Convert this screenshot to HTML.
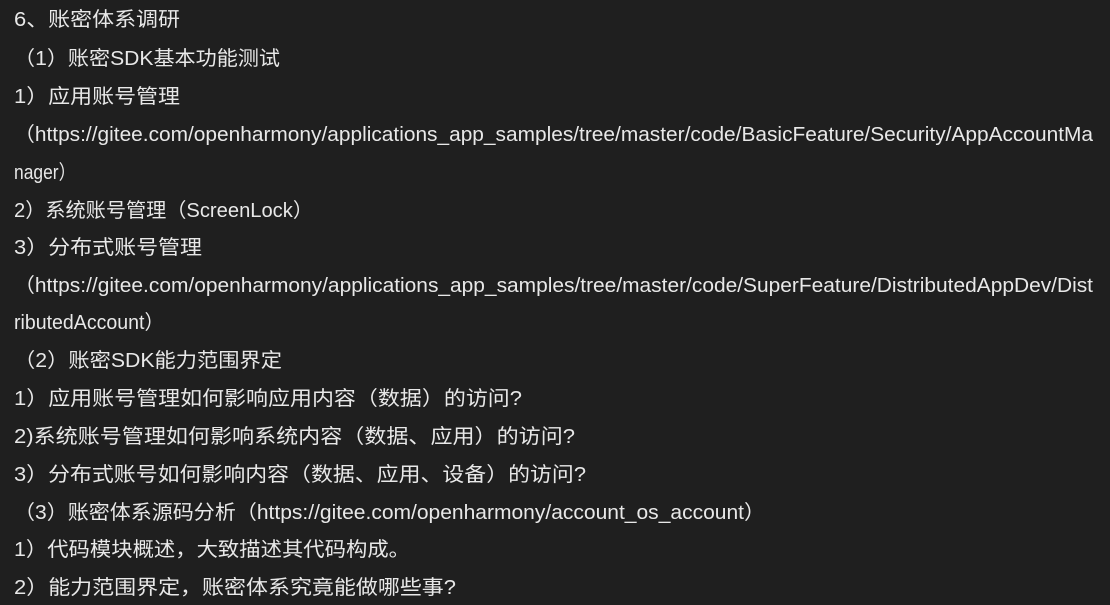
<!DOCTYPE html>
<html><head><meta charset="utf-8"><style>
html,body{margin:0;padding:0;background:#1f1f1f;width:1110px;height:605px;overflow:hidden}
svg text{font-family:"Liberation Sans","Noto Sans CJK SC",sans-serif;font-size:20px;fill:#e8e8e8}
</style></head><body>
<svg width="1110" height="605" xmlns="http://www.w3.org/2000/svg">
<rect width="1110" height="605" fill="#1f1f1f"/>
<g>
<text x="14" y="26" textLength="166" lengthAdjust="spacingAndGlyphs">6、账密体系调研</text>
<text x="14" y="65" textLength="266" lengthAdjust="spacingAndGlyphs">（1）账密SDK基本功能测试</text>
<text x="14" y="103" textLength="166" lengthAdjust="spacingAndGlyphs">1）应用账号管理</text>
<text x="14" y="141" textLength="1079" lengthAdjust="spacingAndGlyphs">（https://gitee.com/openharmony/applications_app_samples/tree/master/code/BasicFeature/Security/AppAccountMa</text>
<text x="14" y="179" textLength="62" lengthAdjust="spacingAndGlyphs">nager）</text>
<text x="14" y="217" textLength="299" lengthAdjust="spacingAndGlyphs">2）系统账号管理（ScreenLock）</text>
<text x="14" y="254" textLength="188" lengthAdjust="spacingAndGlyphs">3）分布式账号管理</text>
<text x="14" y="292" textLength="1079" lengthAdjust="spacingAndGlyphs">（https://gitee.com/openharmony/applications_app_samples/tree/master/code/SuperFeature/DistributedAppDev/Dist</text>
<text x="14" y="329" textLength="150" lengthAdjust="spacingAndGlyphs">ributedAccount）</text>
<text x="14" y="367" textLength="268" lengthAdjust="spacingAndGlyphs">（2）账密SDK能力范围界定</text>
<text x="14" y="405" textLength="508" lengthAdjust="spacingAndGlyphs">1）应用账号管理如何影响应用内容（数据）的访问?</text>
<text x="14" y="443" textLength="561" lengthAdjust="spacingAndGlyphs">2)系统账号管理如何影响系统内容（数据、应用）的访问?</text>
<text x="14" y="481" textLength="572" lengthAdjust="spacingAndGlyphs">3）分布式账号如何影响内容（数据、应用、设备）的访问?</text>
<text x="14" y="519" textLength="751" lengthAdjust="spacingAndGlyphs">（3）账密体系源码分析（https://gitee.com/openharmony/account_os_account）</text>
<text x="14" y="556" textLength="396" lengthAdjust="spacingAndGlyphs">1）代码模块概述，大致描述其代码构成。</text>
<text x="14" y="594" textLength="442" lengthAdjust="spacingAndGlyphs">2）能力范围界定，账密体系究竟能做哪些事?</text>
</g>
</svg>
</body></html>
